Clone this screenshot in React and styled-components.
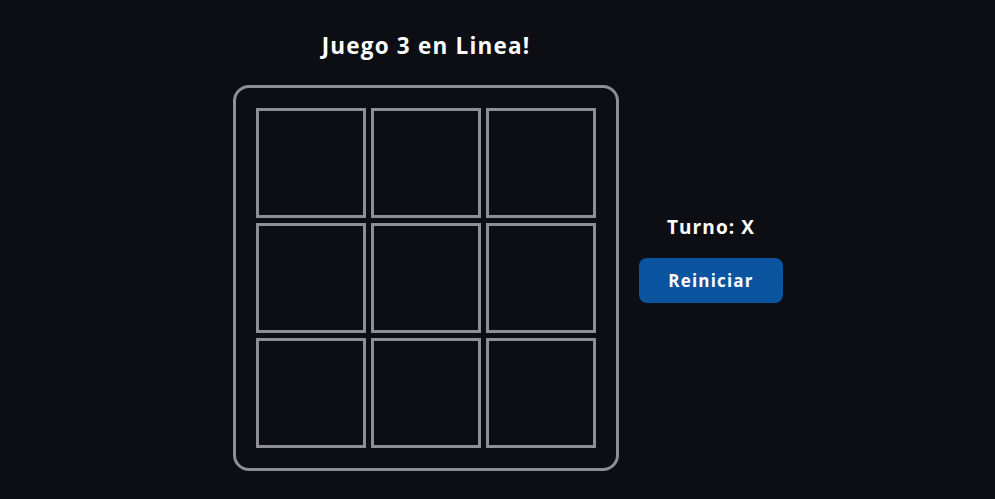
import React, { useState } from "react";
import styled, { createGlobalStyle } from "styled-components";

const GlobalStyle = createGlobalStyle`
  html, body {
    margin: 0;
    padding: 0;
    background: #0d0e13;
    color: #ffffff;
    font-family: "Open Sans", "Noto Sans", sans-serif;
  }
`;

const Page = styled.main`
  display: flex;
  align-items: flex-start;
  gap: 20px;
  padding: 31px 0 0 233px;
  min-height: 499px;
  box-sizing: border-box;
`;

const GameColumn = styled.section`
  display: flex;
  flex-direction: column;
  align-items: center;
`;

const Title = styled.h1`
  margin: 0 0 24px;
  font-size: 22.5px;
  font-weight: 700;
  line-height: 30px;
  letter-spacing: 1.2px;
`;

const Board = styled.div`
  display: grid;
  grid-template-columns: repeat(3, 110px);
  grid-template-rows: repeat(3, 110px);
  gap: 5px;
  padding: 20px;
  border: 3px solid #8e8e93;
  border-radius: 16px;
`;

const Cell = styled.button`
  box-sizing: border-box;
  width: 110px;
  height: 110px;
  padding: 0;
  border: 3px solid #8e8e93;
  background: transparent;
  color: #ffffff;
  font: 700 56px "Open Sans", sans-serif;
  cursor: pointer;
`;

const SidePanel = styled.aside`
  display: flex;
  flex-direction: column;
  align-items: center;
  gap: 17px;
  margin-top: 182px;
`;

const Turn = styled.p`
  margin: 0;
  font-size: 19px;
  font-weight: 700;
  line-height: 28px;
  letter-spacing: 1.1px;
`;

const ResetButton = styled.button`
  width: 144px;
  height: 45px;
  border: none;
  border-radius: 8px;
  background: #0b54a0;
  color: #ffffff;
  font: 700 17px "Open Sans", sans-serif;
  letter-spacing: 1.2px;
  cursor: pointer;
`;

export default function App() {
  const [cells, setCells] = useState(Array(9).fill(""));
  const [turn, setTurn] = useState("X");

  const play = (i) => {
    if (cells[i]) return;
    const next = [...cells];
    next[i] = turn;
    setCells(next);
    setTurn(turn === "X" ? "O" : "X");
  };

  const reset = () => {
    setCells(Array(9).fill(""));
    setTurn("X");
  };

  return (
    <>
      <GlobalStyle />
      <Page>
        <GameColumn>
          <Title>Juego 3 en Linea!</Title>
          <Board>
            {cells.map((c, i) => (
              <Cell key={i} onClick={() => play(i)}>
                {c}
              </Cell>
            ))}
          </Board>
        </GameColumn>
        <SidePanel>
          <Turn>Turno: {turn}</Turn>
          <ResetButton onClick={reset}>Reiniciar</ResetButton>
        </SidePanel>
      </Page>
    </>
  );
}
